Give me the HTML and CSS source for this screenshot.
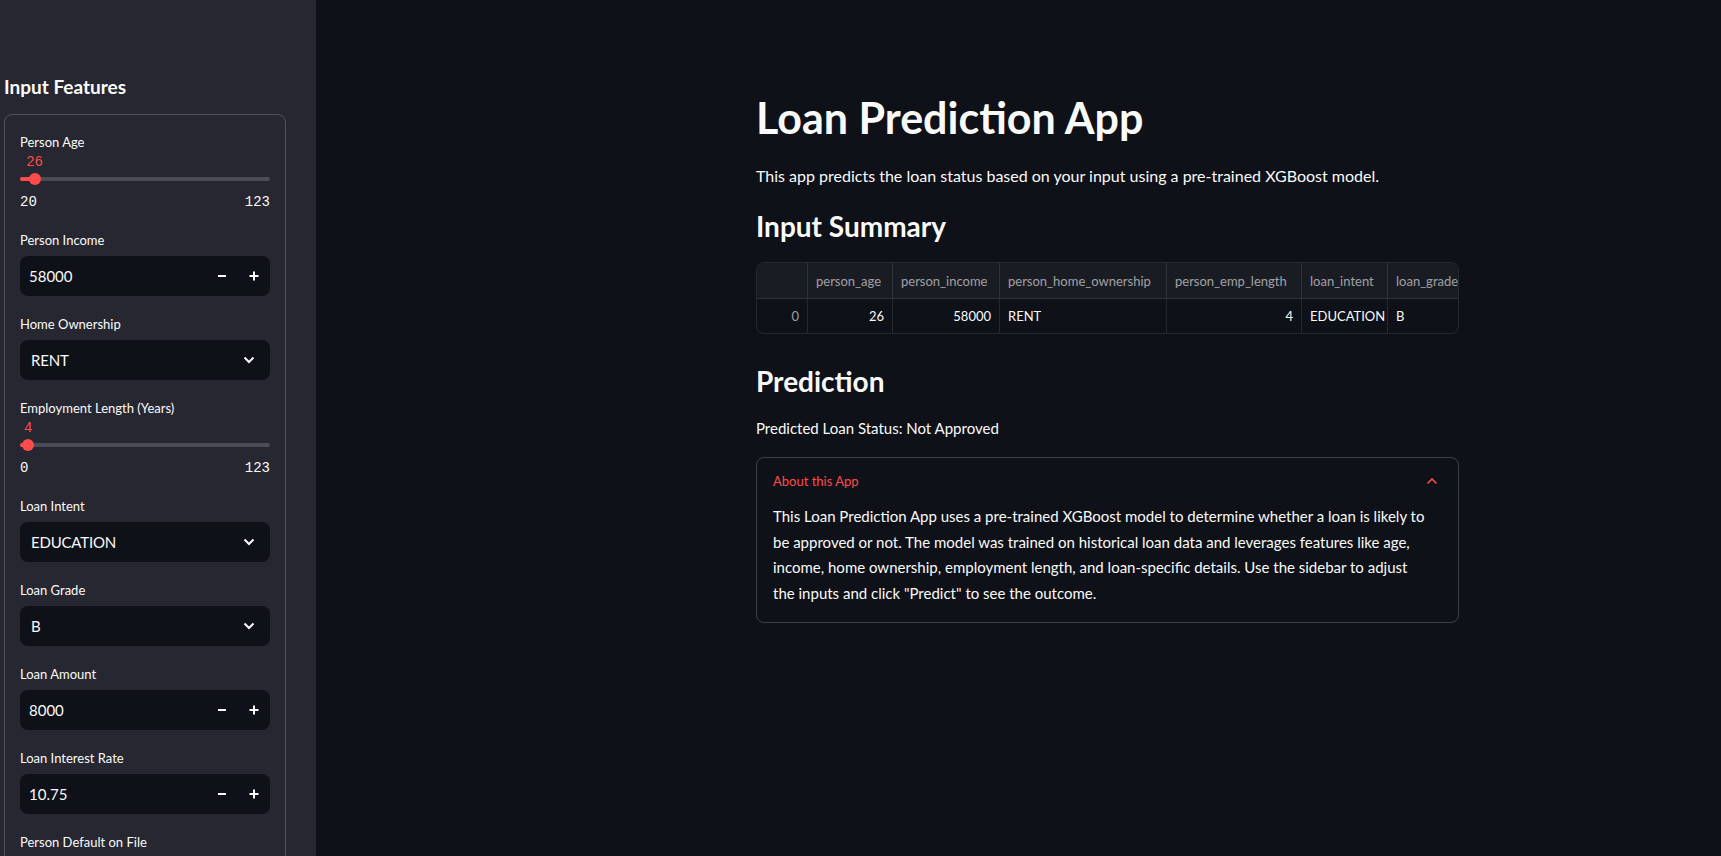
FILE: index.html
```html
<!DOCTYPE html>
<html lang="en">
<head>
<meta charset="utf-8">
<title>Loan Prediction App</title>
<link rel="stylesheet" href="styles.css">
</head>
<body>
<aside class="sidebar">
  <h2 class="sidebar-title">Input Features</h2>
  <div class="form">
    <div class="field">
      <label class="field-label">Person Age</label>
      <div class="slider">
        <div class="slider-value-row"><span class="slider-value" style="left:5.83%">26</span></div>
        <div class="slider-track"><div class="slider-fill" style="width:5.83%"></div><span class="slider-thumb" style="left:5.83%"></span></div>
        <div class="slider-ticks"><span>20</span><span>123</span></div>
      </div>
    </div>
    <div class="field">
      <label class="field-label">Person Income</label>
      <div class="number-input">
        <span class="number-value">58000</span>
        <span class="step-btn"><svg width="12" height="12" viewBox="0 0 12 12"><path d="M2 6h8" stroke="#fafafa" stroke-width="2"/></svg></span>
        <span class="step-btn"><svg width="12" height="12" viewBox="0 0 12 12"><path d="M1.5 6h9M6 1.5v9" stroke="#fafafa" stroke-width="2"/></svg></span>
      </div>
    </div>
    <div class="field">
      <label class="field-label">Home Ownership</label>
      <div class="select-box">
        <span class="select-value">RENT</span>
        <svg class="chevron" width="12" height="8" viewBox="0 0 12 8"><path d="M1.5 1.5l4.5 4.5 4.5-4.5" fill="none" stroke="#fafafa" stroke-width="2"/></svg>
      </div>
    </div>
    <div class="field">
      <label class="field-label">Employment Length (Years)</label>
      <div class="slider">
        <div class="slider-value-row"><span class="slider-value" style="left:3.25%">4</span></div>
        <div class="slider-track"><div class="slider-fill" style="width:3.25%"></div><span class="slider-thumb" style="left:3.25%"></span></div>
        <div class="slider-ticks"><span>0</span><span>123</span></div>
      </div>
    </div>
    <div class="field">
      <label class="field-label">Loan Intent</label>
      <div class="select-box">
        <span class="select-value">EDUCATION</span>
        <svg class="chevron" width="12" height="8" viewBox="0 0 12 8"><path d="M1.5 1.5l4.5 4.5 4.5-4.5" fill="none" stroke="#fafafa" stroke-width="2"/></svg>
      </div>
    </div>
    <div class="field">
      <label class="field-label">Loan Grade</label>
      <div class="select-box">
        <span class="select-value">B</span>
        <svg class="chevron" width="12" height="8" viewBox="0 0 12 8"><path d="M1.5 1.5l4.5 4.5 4.5-4.5" fill="none" stroke="#fafafa" stroke-width="2"/></svg>
      </div>
    </div>
    <div class="field">
      <label class="field-label">Loan Amount</label>
      <div class="number-input">
        <span class="number-value">8000</span>
        <span class="step-btn"><svg width="12" height="12" viewBox="0 0 12 12"><path d="M2 6h8" stroke="#fafafa" stroke-width="2"/></svg></span>
        <span class="step-btn"><svg width="12" height="12" viewBox="0 0 12 12"><path d="M1.5 6h9M6 1.5v9" stroke="#fafafa" stroke-width="2"/></svg></span>
      </div>
    </div>
    <div class="field">
      <label class="field-label">Loan Interest Rate</label>
      <div class="number-input">
        <span class="number-value">10.75</span>
        <span class="step-btn"><svg width="12" height="12" viewBox="0 0 12 12"><path d="M2 6h8" stroke="#fafafa" stroke-width="2"/></svg></span>
        <span class="step-btn"><svg width="12" height="12" viewBox="0 0 12 12"><path d="M1.5 6h9M6 1.5v9" stroke="#fafafa" stroke-width="2"/></svg></span>
      </div>
    </div>
    <div class="field">
      <label class="field-label">Person Default on File</label>
    </div>
  </div>
</aside>
<main class="main">
  <div class="content">
    <h1 class="title">Loan Prediction App</h1>
    <p class="text intro">This app predicts the loan status based on your input using a pre-trained XGBoost model.</p>
    <h3 class="subheader summary-head">Input Summary</h3>
    <div class="dataframe">
      <div class="df-row df-head">
        <div class="df-cell"></div>
        <div class="df-cell">person_age</div>
        <div class="df-cell">person_income</div>
        <div class="df-cell">person_home_ownership</div>
        <div class="df-cell">person_emp_length</div>
        <div class="df-cell">loan_intent</div>
        <div class="df-cell">loan_grade</div>
      </div>
      <div class="df-row df-body">
        <div class="df-cell df-index num">0</div>
        <div class="df-cell num">26</div>
        <div class="df-cell num">58000</div>
        <div class="df-cell">RENT</div>
        <div class="df-cell num">4</div>
        <div class="df-cell">EDUCATION</div>
        <div class="df-cell">B</div>
      </div>
    </div>
    <h3 class="subheader prediction-head">Prediction</h3>
    <p class="text status">Predicted Loan Status: Not Approved</p>
    <div class="expander">
      <div class="expander-header">
        <span class="expander-label">About this App</span>
        <svg class="expander-chevron" width="12" height="8" viewBox="0 0 12 8"><path d="M1.5 6.5l4.5-4.5 4.5 4.5" fill="none" stroke="#ff4b4b" stroke-width="1.6"/></svg>
      </div>
      <div class="expander-body">
        <p>This Loan Prediction App uses a pre-trained XGBoost model to determine whether a loan is likely to<br>be approved or not. The model was trained on historical loan data and leverages features like age,<br>income, home ownership, employment length, and loan-specific details. Use the sidebar to adjust<br>the inputs and click "Predict" to see the outcome.</p>
      </div>
    </div>
  </div>
</main>
</body>
</html>
```

FILE: styles.css
```css
* { box-sizing: border-box; }

html, body {
  margin: 0;
  height: 100%;
}

body {
  display: flex;
  height: 100vh;
  overflow: hidden;
  background: #0e1117;
  color: #fafafa;
  font-family: Lato, "Liberation Sans", sans-serif;
}

/* Sidebar */
.sidebar {
  width: 316px;
  flex: 0 0 316px;
  height: 100vh;
  overflow: hidden;
  background: #262730;
  padding: 75px 30px 0 4px;
}

.sidebar-title {
  margin: 0 0 15px;
  font-size: 19px;
  line-height: 24px;
  font-weight: 700;
}

.form {
  width: 282px;
  min-height: 800px;
  border: 1px solid rgba(250, 250, 250, 0.2);
  border-radius: 8px;
  padding: 15px;
  display: flex;
  flex-direction: column;
  gap: 16px;
}

.field {
  display: flex;
  flex-direction: column;
}

.field-label {
  font-size: 13px;
  line-height: 24px;
  height: 24px;
  margin-bottom: 4px;
  color: #fafafa;
}

/* Slider */
.slider {
  height: 54px;
}

.slider-value-row {
  position: relative;
  height: 16px;
  margin-top: -4px;
}

.slider-value {
  position: absolute;
  top: 0;
  transform: translateX(-50%);
  font-family: "Liberation Mono", "DejaVu Sans Mono", monospace;
  font-size: 14px;
  line-height: 16px;
  color: #ff4b4b;
}

.slider-track {
  position: relative;
  height: 4px;
  margin-top: 7px;
  border-radius: 2px;
  background: #4b4c56;
}

.slider-fill {
  height: 4px;
  border-radius: 2px;
  background: #ff4b4b;
}

.slider-thumb {
  position: absolute;
  top: 50%;
  width: 12px;
  height: 12px;
  border-radius: 50%;
  background: #ff4b4b;
  transform: translate(-50%, -50%);
}

.slider-ticks {
  display: flex;
  justify-content: space-between;
  margin-top: 13px;
  font-family: "Liberation Mono", "DejaVu Sans Mono", monospace;
  font-size: 14px;
  line-height: 16px;
  color: #fafafa;
}

/* Number input / select */
.number-input,
.select-box {
  display: flex;
  align-items: center;
  height: 40px;
  border-radius: 8px;
  background: #0e1117;
}

.number-value {
  flex: 1;
  padding-left: 9px;
  font-size: 15px;
}

.step-btn {
  width: 32px;
  height: 40px;
  display: flex;
  align-items: center;
  justify-content: center;
}

.select-box {
  padding: 0 15px 0 11px;
}

.select-value {
  flex: 1;
  font-size: 15px;
  letter-spacing: -0.2px;
}

/* Main */
.main {
  flex: 1;
  height: 100vh;
  overflow: hidden;
  padding: 92px 0 0 440px;
}

.content {
  width: 703px;
}

.title {
  margin: 0;
  font-size: 43px;
  line-height: 52px;
  font-weight: 700;
}

.text {
  margin: 0;
  font-size: 16px;
  line-height: 24px;
}

.intro { margin-top: 20px; }

.subheader {
  margin: 0;
  font-size: 28px;
  line-height: 36px;
  font-weight: 700;
}

.summary-head { margin-top: 20px; }
.prediction-head { margin-top: 29px; }
.status { margin-top: 17px; font-size: 15px; }

/* Dataframe */
.dataframe {
  margin-top: 18px;
  border: 1px solid rgba(250, 250, 250, 0.1);
  border-radius: 8px;
  overflow: hidden;
  font-size: 13px;
}

.df-row {
  display: grid;
  grid-template-columns: 51px 85px 107px 167px 135px 86px 72px;
}

.df-head {
  height: 36px;
  background: #1a1c24;
  color: rgba(250, 250, 250, 0.6);
  border-bottom: 1px solid rgba(250, 250, 250, 0.1);
}

.df-body {
  height: 34px;
}

.df-cell {
  display: flex;
  align-items: center;
  padding: 0 8px;
  border-right: 1px solid rgba(250, 250, 250, 0.1);
  white-space: nowrap;
  overflow: hidden;
}

.df-cell:last-child { border-right: 0; }
.df-cell.num { justify-content: flex-end; }
.df-index { color: rgba(250, 250, 250, 0.6); }

/* Expander */
.expander {
  margin-top: 17px;
  border: 1px solid rgba(250, 250, 250, 0.2);
  border-radius: 8px;
}

.expander-header {
  height: 46px;
  display: flex;
  align-items: center;
  justify-content: space-between;
  padding: 0 20px 0 16px;
}

.expander-label {
  font-size: 13px;
  color: #ff4b4b;
}

.expander-body {
  padding: 0 16px 16px;
}

.expander-body p {
  margin: 0;
  font-size: 15px;
  line-height: 25.6px;
}
```
